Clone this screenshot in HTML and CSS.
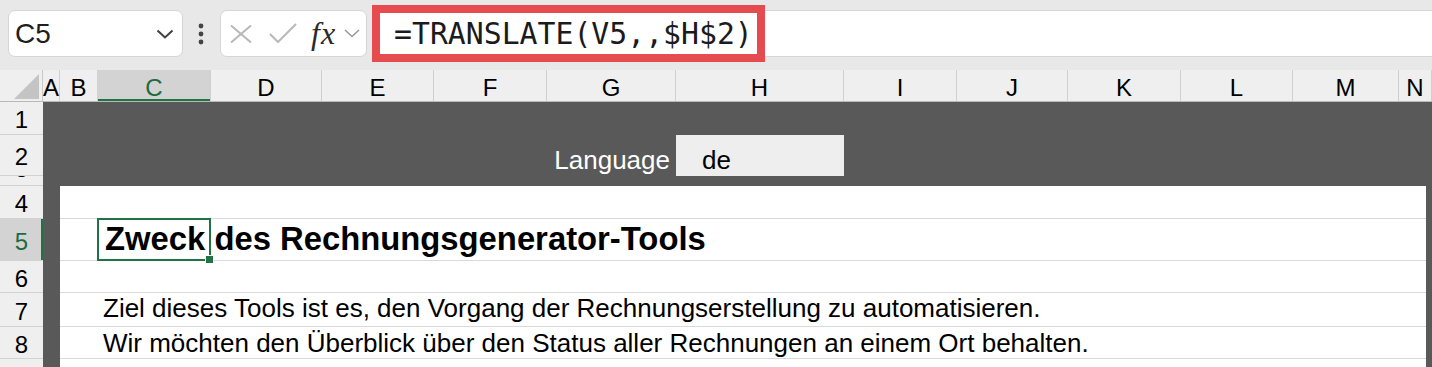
FILE: index.html
```html
<!DOCTYPE html>
<html lang="de">
<head>
<meta charset="utf-8">
<title>Excel – TRANSLATE</title>
<link rel="stylesheet" href="styles.css">
</head>
<body>
<div class="app">
  <header class="toolbar">
    <div class="namebox">
      <span class="ref">C5</span>
      <svg class="chev" width="18" height="10" viewBox="0 0 18 10"><path d="M1.5 1.5 L9 8.5 L16.5 1.5" fill="none" stroke="#3f3f3f" stroke-width="2"/></svg>
    </div>
    <div class="dots">
      <svg width="8" height="24" viewBox="0 0 8 24"><circle cx="4" cy="4" r="2.4"/><circle cx="4" cy="12" r="2.4"/><circle cx="4" cy="20" r="2.4"/></svg>
    </div>
    <div class="fxbox">
      <svg class="ico-x" width="22" height="18" viewBox="0 0 22 18"><path d="M1 0.5 L21 17.5 M21 0.5 L1 17.5" stroke="#b8b8b8" stroke-width="2" fill="none"/></svg>
      <svg class="ico-check" width="28" height="20" viewBox="0 0 28 20"><path d="M1 11 L9 19 L27 1" stroke="#b8b8b8" stroke-width="2" fill="none"/></svg>
      <span class="fx">fx</span>
      <svg class="ico-chev" width="16" height="9" viewBox="0 0 16 9"><path d="M1 1 L8 7.5 L15 1" stroke="#9a9a9a" stroke-width="1.6" fill="none"/></svg>
    </div>
    <div class="formula">
      <div class="hl">=TRANSLATE(V5,,$H$2)</div>
    </div>
  </header>

  <div class="colheads">
    <div class="corner"><svg width="43" height="31" viewBox="0 0 43 31"><path d="M39 4 L39 29 L14 29 Z" fill="#c4c4c4"/></svg></div>
    <div class="ch">A</div>
    <div class="ch">B</div>
    <div class="ch active">C</div>
    <div class="ch">D</div>
    <div class="ch">E</div>
    <div class="ch">F</div>
    <div class="ch">G</div>
    <div class="ch">H</div>
    <div class="ch">I</div>
    <div class="ch">J</div>
    <div class="ch">K</div>
    <div class="ch">L</div>
    <div class="ch">M</div>
    <div class="ch">N</div>
  </div>

  <div class="sheet">
    <div class="rowheads">
      <div class="rh h1">1</div>
      <div class="rh h2">2</div>
      <div class="rh h3"><span>3</span></div>
      <div class="rh h4">4</div>
      <div class="rh h5 active">5</div>
      <div class="rh h6">6</div>
      <div class="rh h7">7</div>
      <div class="rh h8">8</div>
      <div class="rh h9">9</div>
    </div>

    <div class="canvas">
      <div class="drow h1"></div>
      <div class="drow h2">
        <div class="lbl">Language</div>
        <div class="val">de</div>
      </div>
      <div class="drow h3"></div>

      <div class="panel">
        <div class="prow h4"></div>
        <div class="prow h5">
          <div class="cell-c title"><span class="txt">Zweck des Rechnungsgenerator-Tools</span>
            <div class="sel"><span class="handle"></span></div>
          </div>
        </div>
        <div class="prow h6"></div>
        <div class="prow h7"><div class="cell-c body t7"><span class="txt">Ziel dieses Tools ist es, den Vorgang der Rechnungserstellung zu automatisieren.</span></div></div>
        <div class="prow h8"><div class="cell-c body t8"><span class="txt">Wir möchten den Überblick über den Status aller Rechnungen an einem Ort behalten.</span></div></div>
        <div class="prow h9"></div>
      </div>
    </div>
  </div>
</div>
</body>
</html>
```

FILE: styles.css
```css
html, body {
  margin: 0;
  padding: 0;
  overflow: hidden;
  background: #e8e8e8;
}

.app {
  width: 1432px;
  height: 367px;
  overflow: hidden;
  font-family: "Liberation Sans", Arial, sans-serif;
  color: #000;
}

/* ---------- toolbar ---------- */
.toolbar {
  height: 70px;
  box-sizing: border-box;
  padding-bottom: 3px;
  display: flex;
  align-items: center;
  background: #e8e8e8;
}

.namebox {
  margin-left: 8px;
  width: 175px;
  height: 47px;
  box-sizing: border-box;
  background: #fff;
  border: 1px solid #d6d6d6;
  border-radius: 7px;
  display: flex;
  align-items: center;
  padding: 0 8px 0 6px;
}

.namebox .ref {
  flex: 1;
  font-size: 28px;
  color: #1f1f1f;
}

.dots {
  width: 18px;
  margin-left: 9px;
  display: flex;
  justify-content: center;
  fill: #444;
}

.fxbox {
  margin-left: 10px;
  width: 147px;
  height: 47px;
  box-sizing: border-box;
  background: #fff;
  border: 1px solid #d6d6d6;
  border-radius: 7px;
  display: flex;
  align-items: center;
  padding-left: 9px;
}

.ico-check { margin-left: 17px; margin-top: -2px; }

.fx {
  margin-left: 14px;
  font-family: "Liberation Serif", "Times New Roman", serif;
  font-style: italic;
  font-size: 32px;
  letter-spacing: 1px;
  color: #2a2a2a;
  line-height: 1;
  margin-top: -2px;
}

.ico-chev { margin-left: 8px; margin-top: -1px; }

.formula {
  margin-left: 5px;
  flex: 1;
  height: 47px;
  box-sizing: border-box;
  background: #fff;
  border-top: 1px solid #d6d6d6;
  border-bottom: 1px solid #d6d6d6;
  display: flex;
  align-items: center;
}

.hl {
  width: 393px;
  height: 57px;
  box-sizing: border-box;
  flex: none;
  border: 8px solid #e64b4f;
  background: #fff;
  padding-left: 14px;
  font-family: "DejaVu Sans Mono", "Liberation Mono", monospace;
  font-size: 29.8px;
  line-height: 41px;
  color: #1b1b1b;
  white-space: nowrap;
}

/* ---------- column headers ---------- */
.colheads {
  height: 32px;
  box-sizing: border-box;
  display: grid;
  grid-template-columns: 43px 17px 38px 113px 111px 112px 113px 129px 168px 113px 111px 113px 112px 106px 1fr;
  background: #efefef;
  border-bottom: 1px solid #b9b9b9;
}

.corner {
  border-right: 1px solid #c9c9c9;
  box-sizing: border-box;
  line-height: 0;
}

.ch {
  border-right: 1px solid #d0d0d0;
  box-sizing: border-box;
  font-size: 24px;
  text-align: center;
  line-height: 31px;
  padding-top: 2px;
  height: 31px;
  color: #000;
  white-space: nowrap;
}

.ch.active {
  background: #d3d3d3;
  color: #1e6b41;
  box-shadow: inset 0 -2px 0 #217346;
}

/* ---------- sheet ---------- */
.sheet {
  display: flex;
  height: 265px;
}

.rowheads {
  width: 43px;
  flex: none;
  background: #efefef;
}

.rh {
  box-sizing: border-box;
  border-bottom: 1px solid #d2d2d2;
  display: flex;
  align-items: center;
  justify-content: center;
  font-size: 24px;
  line-height: 1;
  padding-top: 4px;
  overflow: hidden;
}

.rh.active {
  background: #d3d3d3;
  color: #1e6b41;
  box-shadow: inset -2px 0 0 #217346;
}

.rh.h3 {
  padding-top: 0;
  align-items: flex-start;
}
.rh.h3 span { margin-top: -19px; }

.h1 { height: 33px; }
.h2 { height: 41px; }
.h3 { height: 10px; }
.h4 { height: 33px; }
.h5 { height: 42px; }
.h6 { height: 32px; }
.h7 { height: 34px; }
.h8 { height: 32px; }
.h9 { height: 33px; }

.canvas {
  flex: 1;
  background: #595959;
}

.drow {
  display: grid;
  grid-template-columns: 17px 38px 113px 111px 112px 113px 129px 168px 1fr;
}

.drow.h2 .lbl {
  grid-column: 7;
  color: #fff;
  font-size: 26px;
  text-align: right;
  padding-right: 6px;
  align-self: end;
  line-height: 1;
  padding-bottom: 3px;
  white-space: nowrap;
}

.drow.h2 .val {
  grid-column: 8;
  background: #eeeeee;
  font-size: 26px;
  line-height: 1;
  padding-left: 26px;
  display: flex;
  align-items: flex-end;
  padding-bottom: 3px;
}

.panel {
  margin-left: 17px;
  width: 1366px;
  background: #fff;
}

.prow {
  box-sizing: border-box;
  border-bottom: 1px solid #d9d9d9;
  display: grid;
  grid-template-columns: 38px 113px 1fr;
}

.cell-c {
  grid-column: 2;
  position: relative;
  white-space: nowrap;
  line-height: 1;
  display: flex;
  align-items: flex-end;
}

.title {
  font-weight: bold;
  font-size: 32.8px;
  padding-left: 7px;
  padding-bottom: 4px;
}

.body {
  font-size: 26px;
  padding-left: 5px;
}
.t7 { padding-bottom: 5px; }
.t8 { padding-bottom: 2px; }

.sel {
  position: absolute;
  left: -1px;
  top: -1px;
  width: 114px;
  height: 43px;
  box-sizing: border-box;
  border: 2px solid #217346;
}

.handle {
  position: absolute;
  right: -5px;
  bottom: -5px;
  width: 7px;
  height: 7px;
  background: #217346;
  border: 1px solid #fff;
}
```
